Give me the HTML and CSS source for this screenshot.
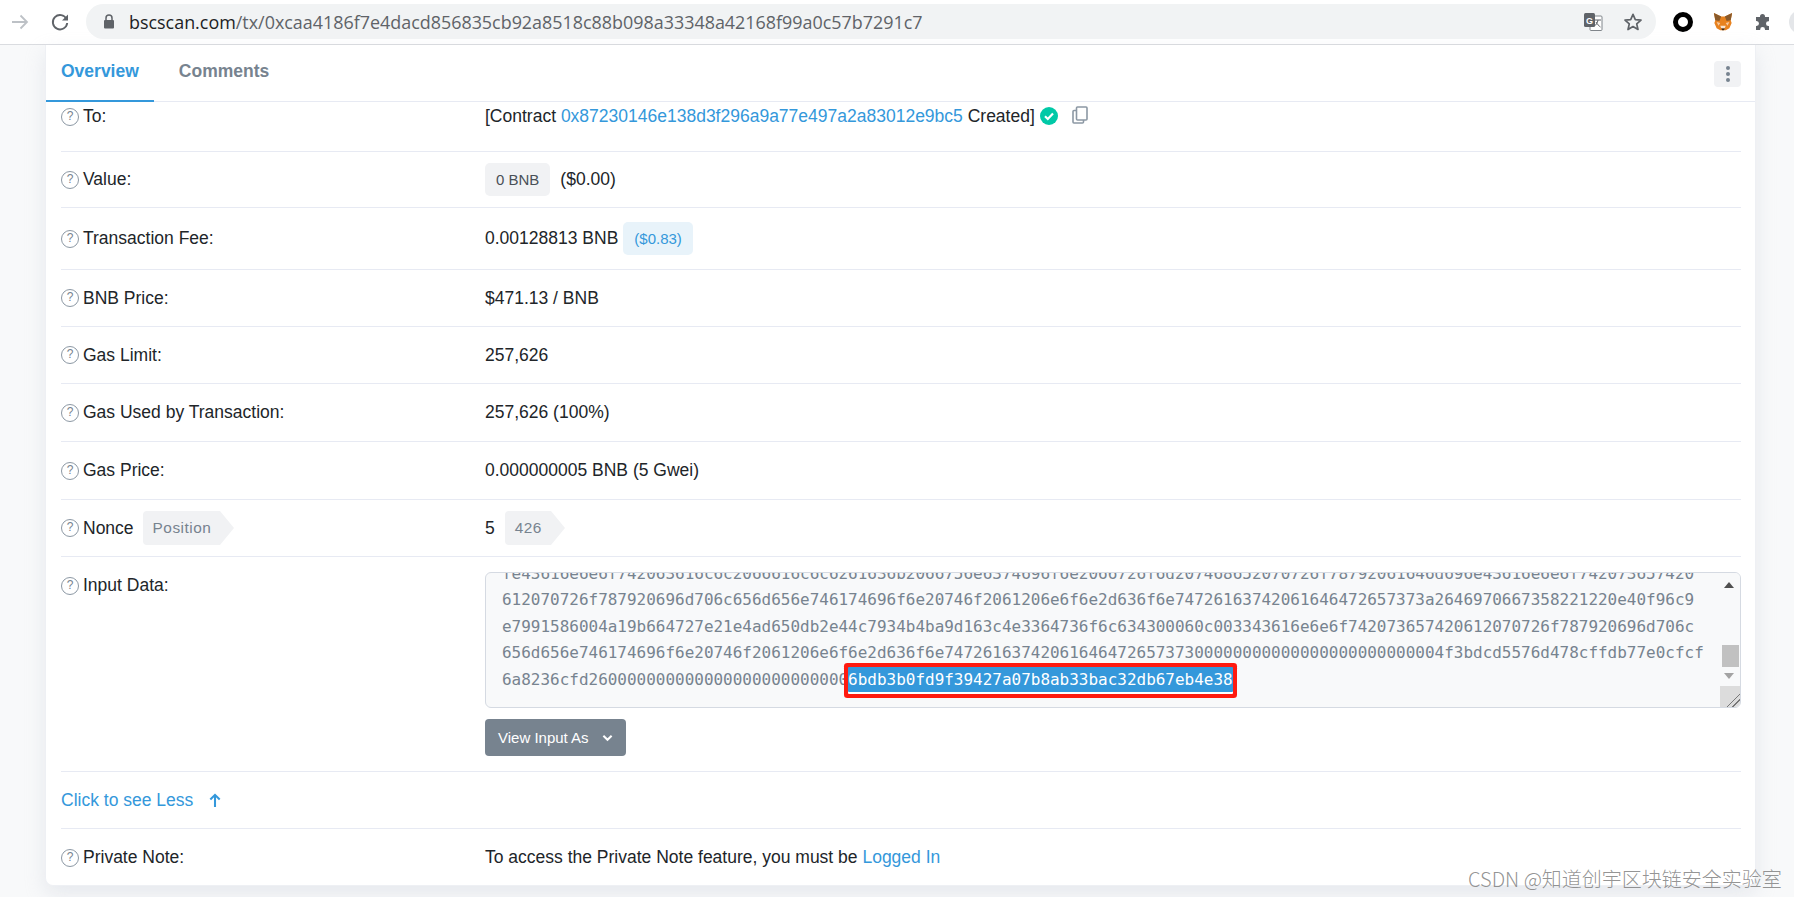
FILE: index.html
```html
<!DOCTYPE html>
<html lang="en">
<head>
<meta charset="utf-8">
<title>BscScan Transaction</title>
<link rel="stylesheet" href="styles.css">
</head>
<body>
<header class="toolbar">
  <svg class="nav-icon back" viewBox="0 0 20 20"><path d="M2 10h15M10.500 3.500 17 10l-6.500 6.500" fill="none" stroke="#bdc1c6" stroke-width="1.800"/></svg>
  <svg class="nav-icon reload" viewBox="0 0 20 20"><path d="M16.500 7A7.200 7.200 0 1 0 17.200 11" fill="none" stroke="#5f6368" stroke-width="1.900"/><path d="M18 2.500V8.500H12z" fill="#5f6368"/></svg>
  <div class="omnibox">
    <svg class="lock" viewBox="0 0 12 15"><path d="M3 6V4a3 3 0 0 1 6 0v2" fill="none" stroke="#5f6368" stroke-width="1.500"/><rect x="1" y="6" width="10" height="8.500" rx="1" fill="#5f6368"/></svg>
    <span class="url"><span class="host">bscscan.com</span>/tx/0xcaa4186f7e4dacd856835cb92a8518c88b098a33348a42168f99a0c57b7291c7</span>
    <span class="omni-actions">
      <svg class="translate" viewBox="0 0 20 20"><rect x="7" y="4" width="12" height="14.500" rx="1" fill="#fff" stroke="#80868b"/><rect x="1" y="1" width="11" height="14" rx="1.500" fill="#5f6368"/><text x="3" y="12" class="translate-g">G</text><path d="M12 8h6M15 8c-.5 3-2 5-3.500 6M13 10c1 2 3 4 4.500 5" fill="none" stroke="#5f6368" stroke-width="1"/></svg>
      <svg class="star" viewBox="0 0 20 20"><path d="M10 2.300 12.300 7.600 18 8.100 13.700 11.900 15 17.500 10 14.500 5 17.500 6.300 11.900 2 8.100 7.700 7.600z" fill="none" stroke="#5f6368" stroke-width="1.700" stroke-linejoin="round"/></svg>
    </span>
  </div>
  <div class="extensions">
    <span class="ring"></span>
    <svg class="fox" viewBox="0 0 22 22"><path d="M1 1 9 5h4l8-4-1.500 8 1 3-2.500 6-4 2H8l-4-2-2.500-6 1-3z" fill="#e8821e"/><path d="M1 1 9 5 7 10 2.500 9zM21 1 13 5l2 5 4.500-1z" fill="#8a5a2b"/><path d="M4 11l4 1-2 3zM18 11l-4 1 2 3z" fill="#f6c9a0"/><path d="M9 18h4l-1 2h-2z" fill="#3a2a1e"/><path d="M8 15h6l-1 3H9z" fill="#f6e3d0"/></svg>
    <svg class="puzzle" viewBox="0 0 20 20"><path d="M7 4.500a2.500 2.500 0 0 1 5 0V5h4v4.300h-.6a2.400 2.400 0 0 0 0 4.800h.6V18h-4v-.6a2.400 2.400 0 0 0-4.800 0v.6H3v-4h.5a2.500 2.500 0 0 0 0-5H3V5h4z" fill="#5f6368"/></svg>
    <span class="avatar"></span>
  </div>
</header>

<main class="page">
  <section class="card">
    <nav class="tabs">
      <a class="tab active">Overview</a>
      <a class="tab">Comments</a>
      <button class="kebab" aria-label="More"><i></i><i></i><i></i></button>
    </nav>
    <div class="rows">
      <div class="row row-to">
        <div class="label"><span class="help">?</span>To:</div>
        <div class="value">[Contract <a class="link">0x87230146e138d3f296a9a77e497a2a83012e9bc5</a> Created]<svg class="check" viewBox="0 0 18 18"><circle cx="9" cy="9" r="9" fill="#00c9a7"/><path d="M5 9.300 7.800 12 13 6.500" fill="none" stroke="#fff" stroke-width="2.200"/></svg><svg class="copy" viewBox="0 0 16 18"><path d="M5.500 1h8.500a1 1 0 0 1 1 1v11a1 1 0 0 1-1 1H5.500a1 1 0 0 1-1-1V2a1 1 0 0 1 1-1zM4.500 4.500H2a1 1 0 0 0-1 1V16a1 1 0 0 0 1 1h8.500a1 1 0 0 0 1-1v-2" fill="none" stroke="#8c98a4" stroke-width="1.600"/></svg></div>
      </div>
      <div class="row row-56">
        <div class="label"><span class="help">?</span>Value:</div>
        <div class="value value-flex"><span class="pill">0 BNB</span><span>($0.00)</span></div>
      </div>
      <div class="row row-62">
        <div class="label"><span class="help">?</span>Transaction Fee:</div>
        <div class="value value-flex">0.00128813 BNB<span class="pill pill-blue">($0.83)</span></div>
      </div>
      <div class="row">
        <div class="label"><span class="help">?</span>BNB Price:</div>
        <div class="value">$471.13 / BNB</div>
      </div>
      <div class="row">
        <div class="label"><span class="help">?</span>Gas Limit:</div>
        <div class="value">257,626</div>
      </div>
      <div class="row row-58">
        <div class="label"><span class="help">?</span>Gas Used by Transaction:</div>
        <div class="value">257,626 (100%)</div>
      </div>
      <div class="row row-58">
        <div class="label"><span class="help">?</span>Gas Price:</div>
        <div class="value">0.000000005 BNB (5 Gwei)</div>
      </div>
      <div class="row">
        <div class="label"><span class="help">?</span>Nonce<span class="tag tag-label">Position</span></div>
        <div class="value value-flex">5<span class="tag tag-value">426</span></div>
      </div>
      <div class="row row-input">
        <div class="label label-input"><span class="help">?</span>Input Data:</div>
        <div class="value value-input">
          <div class="hexbox">
            <div class="hex">fe43616e6e6f742063616c6c2066616c6c6261636b2066756e6374696f6e2066726f6d207468652070726f78792061646d696e43616e6e6f742073657420
612070726f787920696d706c656d656e746174696f6e20746f2061206e6f6e2d636f6e74726163742061646472657373a2646970667358221220e40f96c9
e7991586004a19b664727e21e4ad650db2e44c7934b4ba9d163c4e3364736f6c634300060c003343616e6e6f742073657420612070726f787920696d706c
656d656e746174696f6e20746f2061206e6f6e2d636f6e7472616374206164647265737300000000000000000000000004f3bdcd5576d478cffdb77e0cfcf
6a8236cfd260000000000000000000000000<mark class="selected">6bdb3b0fd9f39427a07b8ab33bac32db67eb4e38</mark></div>
            <div class="scrollbar">
              <span class="arrow up"></span>
              <span class="thumb"></span>
              <span class="arrow down"></span>
              <span class="resizer"></span>
            </div>
          </div>
          <button class="view-btn">View Input As
            <svg class="chev" viewBox="0 0 12 8"><path d="M1.500 1.500 6 6l4.500-4.500" fill="none" stroke="#fff" stroke-width="2.200"/></svg>
          </button>
        </div>
      </div>
      <div class="row">
        <a class="link see-less">Click to see Less
          <svg class="up-arrow" viewBox="0 0 14 16"><path d="M7 15V2M2 7l5-5 5 5" fill="none" stroke="#3498db" stroke-width="2.200"/></svg>
        </a>
      </div>
      <div class="row row-last">
        <div class="label"><span class="help">?</span>Private Note:</div>
        <div class="value">To access the Private Note feature, you must be <a class="link">Logged In</a></div>
      </div>
    </div>
  </section>
</main>
<div class="watermark">CSDN @知道创宇区块链安全实验室</div>
</body>
</html>
```
FILE: styles.css
```css
* { box-sizing: border-box; }
html, body { margin: 0; height: 897px; overflow: hidden; }
body {
  background: #f8f9fa;
  font-family: "Liberation Sans", Arial, sans-serif;
  font-size: 17.500px;
  color: #212529;
  position: relative;
}
.toolbar {
  height: 45px;
  background: #fff;
  border-bottom: 1px solid #dadce0;
  display: flex;
  align-items: center;
  padding: 0 0 1px 10px;
  overflow: hidden;
}
.nav-icon { width: 20px; height: 20px; flex: none; }
.back { margin-right: 20px; }
.reload { margin-right: 16px; }
.omnibox {
  width: 1570px;
  height: 35px;
  background: #f1f3f4;
  border-radius: 18px;
  display: flex;
  align-items: center;
  padding-left: 17px;
  flex: none;
}
.lock { width: 12px; height: 15px; margin-right: 14px; flex: none; }
.url { font-family: "Open Sans", sans-serif; font-size: 17.920px; color: #5f6368; white-space: nowrap; }
.host { color: #202124; }
.omni-actions { margin-left: auto; display: flex; align-items: center; gap: 20px; padding-right: 13px; }
.translate { width: 20px; height: 20px; }
.translate-g { font: bold 9px "Liberation Sans", sans-serif; fill: #fff; }
.star { width: 20px; height: 20px; }
.extensions { display: flex; align-items: center; margin-left: 17px; gap: 20px; flex: none; }
.ring { width: 20px; height: 20px; border-radius: 50%; border: 5px solid #000; background: #fff; }
.fox { width: 20px; height: 20px; }
.puzzle { width: 20px; height: 20px; }
.avatar { width: 24px; height: 24px; border-radius: 50%; background: #e4e6e9; margin-left: -4px; }

.page { padding: 0 38px 0 45px; }
.card {
  height: 841px;
  background: #fff;
  border-radius: 0 0 8px 8px;
  box-shadow: 0 8px 20px rgba(189, 197, 209, .3);
  border: 1px solid #eef0f4;
  border-top: 0;
}
.tabs {
  height: 57px;
  border-bottom: 1px solid #e7eaf3;
  display: flex;
  align-items: stretch;
  padding-right: 14px;
}
.tab {
  font-weight: 700;
  color: #77838f;
  padding: 0 15px 3px;
  margin-right: 10px;
  display: flex;
  align-items: center;
  margin-bottom: -1px;
  border-bottom: 2px solid transparent;
}
.tab.active { color: #3498db; border-bottom-color: #3498db; }
.kebab {
  margin: 16px 0 14px auto;
  width: 27px;
  border: 0;
  padding: 0;
  background: #f1f2f4;
  border-radius: 4px;
  display: flex;
  flex-direction: column;
  align-items: center;
  justify-content: center;
  gap: 2px;
}
.kebab i { width: 4px; height: 4px; border-radius: 50%; background: #77838f; }

.rows { padding: 0 14px 0 15px; }
.row {
  height: 57px;
  display: flex;
  align-items: center;
  border-bottom: 1px solid #e7eaf3;
}
.row-to { height: 50px; align-items: flex-start; padding-top: 4px; }
.row-56 { height: 56px; }
.row-62 { height: 62px; }
.row-58 { height: 58px; }
.row-input { height: 215px; align-items: flex-start; padding-top: 15px; }
.row-last { border-bottom: 0; }
.label { width: 424px; flex: none; display: flex; align-items: center; }
.label-input { padding-top: 3px; }
.value-flex { display: flex; align-items: center; }
.help {
  width: 18px;
  height: 18px;
  border: 1.500px solid #8c98a4;
  border-radius: 50%;
  color: #77838f;
  font-size: 12px;
  line-height: 15px;
  text-align: center;
  margin-right: 4px;
  flex: none;
}
.link { color: #3498db; }
.check { width: 18px; height: 18px; margin-left: 5px; vertical-align: -3px; }
.copy { width: 16px; height: 18px; margin-left: 14px; vertical-align: -2px; }
.pill {
  height: 33px;
  padding: 0 11px;
  margin-right: 10px;
  border-radius: 5px;
  background: #f1f2f4;
  color: #495057;
  font-size: 15px;
  display: flex;
  align-items: center;
}
.pill-blue { background: #e8f3fa; color: #3498db; margin: 0 0 0 5px; }
.tag {
  position: relative;
  height: 34px;
  background: #f1f2f4;
  color: #77838f;
  font-size: 15.400px;
  letter-spacing: .5px;
  display: flex;
  align-items: center;
  padding: 0 9px 0 10px;
  border-radius: 4px 0 0 4px;
}
.tag::after {
  content: "";
  position: absolute;
  left: 100%;
  top: 0;
  border-left: 14px solid #f1f2f4;
  border-top: 17px solid transparent;
  border-bottom: 17px solid transparent;
}
.tag-label { margin-left: 9px; }
.tag-value { margin-left: 10px; }
.value-input { flex: 1; min-width: 0; }
.hexbox {
  position: relative;
  height: 136px;
  background: #f8f9fa;
  border: 1px solid #d5dae2;
  border-radius: 6px;
  overflow: hidden;
  display: flex;
  flex-direction: column;
  justify-content: flex-end;
  padding: 0 0 14px 16px;
}
.hex {
  font-family: "DejaVu Sans Mono", monospace;
  font-size: 15.970px;
  line-height: 26.400px;
  color: #77838f;
  white-space: pre;
}
.selected {
  display: inline-block;
  position: relative;
  height: 25px;
  line-height: 25px;
  background: #3498db;
  color: #fff;
  box-shadow: 0 2px 0 #fff, 0 0 0 4px #ff1a0f, 0 2px 0 4px #ff1a0f;
  border-radius: 1px;
}
.scrollbar {
  position: absolute;
  top: 0;
  right: 0;
  bottom: 0;
  width: 20px;
  background: #f8f9fa;
}
.arrow { position: absolute; left: 4px; border-left: 5px solid transparent; border-right: 5px solid transparent; }
.arrow.up { top: 9px; border-bottom: 6px solid #505050; }
.arrow.down { top: 100px; border-top: 6px solid #a3a3a3; }
.thumb { position: absolute; left: 2px; width: 17px; top: 72px; height: 22px; background: #c1c1c1; }
.resizer {
  position: absolute;
  right: 0;
  bottom: 0;
  width: 20px;
  height: 21px;
  background:
    linear-gradient(135deg, transparent 66%, #777 66%, #777 69%, transparent 69%, transparent 80%, #777 80%, #777 83%, transparent 83%),
    #dcdcdc;
}
.view-btn {
  margin-top: 11px;
  width: 141px;
  height: 37px;
  border: 0;
  border-radius: 4px;
  background: #77838f;
  color: #fff;
  font-family: "Liberation Sans", sans-serif;
  font-size: 15px;
  display: flex;
  align-items: center;
  gap: 13px;
  padding: 0 0 0 13px;
}
.chev { width: 11px; height: 8px; }
.see-less { display: flex; align-items: center; gap: 15px; }
.up-arrow { width: 14px; height: 15px; }
.row-last { height: 57px; }
.watermark {
  position: absolute;
  left: 1468px;
  top: 866px;
  font-family: "Noto Sans CJK SC", "Noto Sans", sans-serif;
  font-size: 20px;
  line-height: 26px;
  font-weight: 300;
  color: rgba(120, 120, 120, .8);
  white-space: nowrap;
}
```
